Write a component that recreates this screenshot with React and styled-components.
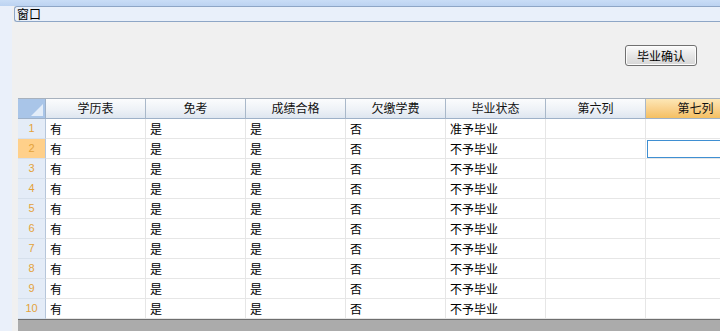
import React from 'react';
import styled, { createGlobalStyle } from 'styled-components';

const GlobalStyle = createGlobalStyle`
  html, body, #root {
    margin: 0;
    padding: 0;
    height: 100%;
    overflow: hidden;
  }
  body {
    font-family: "Noto Sans CJK SC", "Liberation Sans", sans-serif;
    font-size: 12px;
    color: #000;
    background: #f0f0f0;
  }
`

const Page = styled.div`
  display: flex;
  flex-direction: column;
  width: 720px;
  height: 331px;
  overflow: hidden;
`
const TopBar = styled.div`
  height: 6px;
  flex: none;
  background: linear-gradient(#c9ddf6, #bcd3f1);
`
const Body = styled.div`
  flex: 1;
  display: flex;
  min-height: 0;
`
const Side = styled.div`
  width: 12px;
  flex: none;
  background: #eaf0fa;
`
const Content = styled.div`
  flex: 1;
  display: flex;
  flex-direction: column;
  background: #f0f0f0;
  min-width: 0;
  overflow: hidden;
`
const TitleBox = styled.div`
  height: 14px;
  flex: none;
  margin-left: 2px;
  background: #e9f0fa;
  border: 1px solid #8ea6c6;
  border-right: none;
  border-radius: 3px 0 0 3px;
  padding-left: 2px;
  font-size: 12px;
  line-height: 14px;
`
const Toolbar = styled.div`
  height: 76px;
  flex: none;
  display: flex;
  justify-content: flex-end;
  align-items: flex-start;
  padding: 23px 23px 0 0;
  box-sizing: border-box;
`
const Button = styled.button`
  width: 72px;
  height: 21px;
  padding: 0;
  font-family: inherit;
  font-size: 12px;
  line-height: 17px;
  color: #000;
  background: linear-gradient(#fbfbfb, #e6e6e6 50%, #d6d6d6);
  border: 1px solid #707070;
  border-radius: 3px;
  box-shadow: inset 0 0 0 1px #fcfcfc;
`
const GridWrap = styled.div`
  flex: 1;
  display: flex;
  flex-direction: column;
  margin-left: 6px;
  min-height: 0;
`
const Grid = styled.div`
  display: grid;
  grid-template-columns: 28px repeat(7, 100px);
  grid-auto-rows: 20px;
  border-top: 1px solid #a7b1bd;
  background: #fff;
  width: max-content;
`
const Corner = styled.div`
  position: relative;
  background: #a9c5e8;
  border-right: 1px solid #9eb1c8;
  border-bottom: 1px solid #9eb1c8;
  box-sizing: border-box;
  overflow: hidden;
`
const CornerMark = styled.svg`
  position: absolute;
  right: 2px;
  bottom: 2px;
`
const HeadCell = styled.div`
  box-sizing: border-box;
  text-align: center;
  line-height: 18px;
  font-size: 12px;
  color: #111;
  border-right: 1px solid #a9b8c9;
  border-bottom: 1px solid #9eb1c8;
  background: ${p => p.$active
    ? 'linear-gradient(#fde7b6, #f9d08a 55%, #f5c062)'
    : 'linear-gradient(#fbfcfd, #eef2f7 55%, #dee6f0)'};
`
const RowNum = styled.div`
  box-sizing: border-box;
  text-align: center;
  line-height: 19px;
  font-size: 11px;
  font-family: "Liberation Sans", sans-serif;
  color: #e3a23b;
  border-right: 1px solid #b6c6da;
  border-bottom: 1px solid #d6e0ec;
  background: ${p => p.$active ? '#ffd08a' : '#e4ecf7'};
`
const Cell = styled.div`
  position: relative;
  box-sizing: border-box;
  padding-left: 4px;
  line-height: 19px;
  font-size: 12px;
  border-right: 1px solid #e6e6e6;
  border-bottom: 1px solid #e6e6e6;
  white-space: nowrap;
  overflow: hidden;
`
const Focus = styled.div`
  position: absolute;
  inset: 1px 0 0 1px;
  border: 1px solid #3f8fd2;
`
const Footer = styled.div`
  flex: 1;
  background: #ababab;
  border-top: 1px solid #6e6e6e;
`

const columns = ['学历表', '免考', '成绩合格', '欠缴学费', '毕业状态', '第六列', '第七列']

const rows = Array.from({ length: 10 }, (_, i) => [
  '有', '是', '是', '否', i === 0 ? '准予毕业' : '不予毕业', '', '',
])

export default function App() {
  return (
    <>
      <GlobalStyle />
      <Page>
        <TopBar />
        <Body>
          <Side />
          <Content>
            <TitleBox>窗口</TitleBox>
            <Toolbar>
              <Button>毕业确认</Button>
            </Toolbar>
            <GridWrap>
              <Grid>
                <Corner>
                  <CornerMark width="12" height="12" viewBox="0 0 12 12">
                    <polygon points="12,0 12,12 0,12" fill="#e3edf9" />
                  </CornerMark>
                </Corner>
                {columns.map((c, i) => (
                  <HeadCell key={c} $active={i === 6}>{c}</HeadCell>
                ))}
                {rows.map((row, r) => (
                  <React.Fragment key={r}>
                    <RowNum $active={r === 1}>{r + 1}</RowNum>
                    {row.map((v, c) => (
                      <Cell key={c}>
                        {v}
                        {r === 1 && c === 6 && <Focus />}
                      </Cell>
                    ))}
                  </React.Fragment>
                ))}
              </Grid>
              <Footer />
            </GridWrap>
          </Content>
        </Body>
      </Page>
    </>
  )
}
